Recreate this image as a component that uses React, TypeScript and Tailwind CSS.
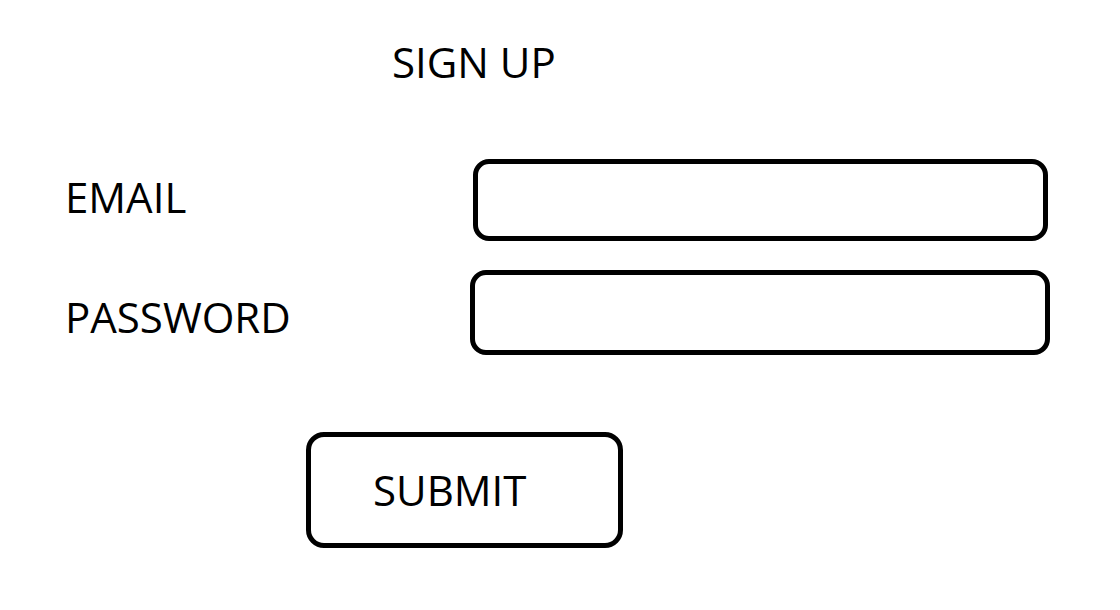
export default function App() {
  return (
    <main className="w-[1120px] h-[610px] bg-white text-black font-['Open_Sans',sans-serif] text-[42px] leading-10">
      {/* Title */}
      <h1 className="pt-[42px] pl-[392px] font-normal">SIGN UP</h1>

      {/* Email row */}
      <div className="flex items-start mt-[77px] pl-[65px]">
        <label className="w-[408px] mt-[18px]">EMAIL</label>
        <input
          type="email"
          className="w-[575px] h-[82px] border-[5px] border-black rounded-[16px] outline-none px-4 text-2xl"
        />
      </div>

      {/* Password row */}
      <div className="flex items-start mt-[29px] pl-[65px]">
        <label className="w-[405px] mt-[27px]">PASSWORD</label>
        <input
          type="password"
          className="w-[580px] h-[85px] border-[5px] border-black rounded-[16px] outline-none px-4 text-2xl"
        />
      </div>

      {/* Submit */}
      <button className="flex items-center mt-[77px] ml-[306px] w-[317px] h-[116px] border-[5px] border-black rounded-[18px] pl-[62px]">
        SUBMIT
      </button>
    </main>
  );
}
